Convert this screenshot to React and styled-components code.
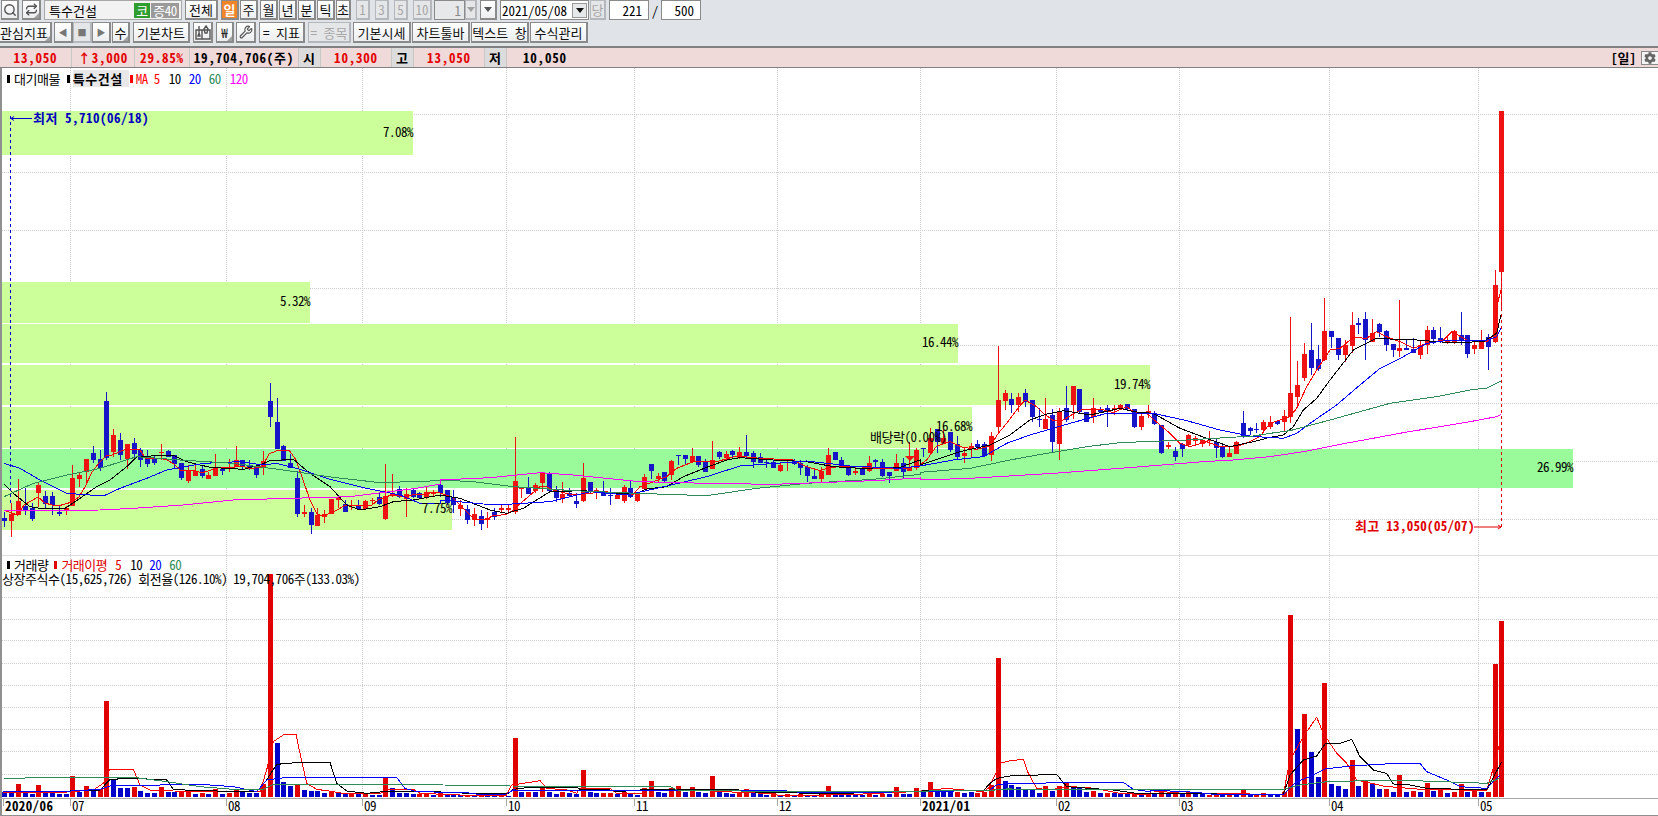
import React from "react";
import styled, { createGlobalStyle } from "styled-components";
import { Search, Repeat, Wrench } from "lucide-react";
import { FaCog } from "react-icons/fa";

const FONT = `"Noto Sans CJK KR", "Liberation Sans", sans-serif`;
const SCALE_X = (i) => 4.3 + 6.805 * i;

// read off the reference: [bodyTop, bodyBottom, wickTop, wickBottom, isRed]
const CANDLES = [
  [518,521,512,527,0],[514,521,503,537,1],[501,515,479,515,1],[506,511,488,515,0],[508,519,503,521,0],
  [485,493,482,507,1],[496,504,491,508,0],[496,505,492,515,0],[512,514,506,516,0],[508,510,506,515,1],
  [478,506,465,506,1],[475,479,472,487,1],[459,472,459,483,1],[453,460,446,463,0],[459,468,450,471,0],
  [401,458,392,460,0],[435,452,429,457,1],[440,455,433,460,0],[444,459,444,469,1],[443,454,438,457,0],
  [450,460,448,467,0],[459,464,450,467,0],[459,463,455,465,0],[452,453,444,460,1],[451,457,450,457,0],
  [455,464,455,468,0],[463,478,463,480,0],[471,481,465,483,1],[471,476,464,476,1],[469,476,465,478,0],
  [475,479,472,479,1],[468,476,454,476,1],[469,471,467,475,0],[468,469,459,472,1],[460,467,446,467,1],
  [460,467,460,470,0],[466,467,460,470,0],[467,475,464,478,0],[461,468,451,475,1],[401,417,383,427,0],
  [422,449,398,449,0],[446,461,445,461,0],[463,468,454,468,0],[478,514,471,517,0],[512,514,505,517,1],
  [512,525,508,534,0],[515,526,508,526,1],[514,517,510,523,1],[499,514,499,514,1],[498,500,495,508,1],
  [504,512,500,512,0],[505,506,500,510,1],[505,509,500,510,0],[501,509,500,510,1],[500,501,498,505,1],
  [497,504,493,505,0],[496,519,464,520,1],[493,495,474,497,1],[489,497,486,498,0],[494,499,488,517,1],
  [490,497,488,498,0],[493,498,492,499,0],[492,498,487,499,1],[492,494,490,497,1],[485,493,482,497,0],
  [490,503,490,505,0],[497,505,490,513,0],[505,509,500,516,1],[509,520,505,524,0],[514,520,508,526,1],
  [516,524,510,530,0],[518,520,512,528,1],[512,517,508,520,0],[508,510,504,513,1],[508,510,504,513,1],
  [481,512,437,514,1],[487,489,487,498,1],[487,494,477,494,0],[485,491,483,493,1],[473,483,472,492,1],
  [473,491,472,493,0],[490,498,486,502,0],[494,499,482,503,1],[493,496,488,497,0],[501,504,493,508,0],
  [478,501,463,502,1],[482,492,482,493,0],[490,493,488,499,1],[492,496,481,496,0],[495,496,488,505,0],
  [495,499,492,499,1],[487,501,485,503,1],[488,497,481,498,0],[492,501,492,502,1],[477,489,474,489,1],
  [464,471,464,479,0],[476,479,473,483,1],[472,481,472,483,0],[461,475,460,480,1],[455,456,455,465,0],
  [455,459,455,465,0],[456,462,448,463,1],[456,465,456,467,0],[462,472,459,472,0],[460,469,441,469,1],
  [452,457,451,459,0],[454,458,451,460,1],[451,455,450,458,0],[452,458,447,459,1],[452,456,435,458,0],
  [453,462,451,468,0],[457,463,453,463,0],[462,463,460,468,0],[462,468,460,468,0],[465,471,463,472,1],
  [462,463,459,471,1],[461,464,459,465,0],[463,468,460,475,0],[467,476,465,482,0],[476,479,470,479,0],
  [471,479,467,482,1],[455,475,448,475,1],[452,460,452,460,0],[460,467,457,468,0],[466,475,465,476,0],
  [471,473,467,475,1],[469,475,467,475,0],[463,471,456,472,1],[460,462,459,467,0],[462,476,459,477,0],
  [472,476,472,483,0],[463,471,454,471,1],[463,472,458,479,0],[467,471,442,471,1],[450,468,448,470,1],
  [448,449,448,457,0],[438,453,428,455,1],[429,442,429,453,0],[438,443,429,443,1],[432,450,432,452,0],
  [444,457,436,460,0],[453,456,448,463,1],[446,449,443,458,1],[444,447,440,450,0],[444,456,442,457,0],
  [436,455,432,461,1],[400,427,346,432,1],[393,401,390,410,1],[399,405,393,413,0],[397,405,393,412,1],
  [393,402,389,407,0],[400,417,400,422,0],[419,420,408,427,0],[419,429,398,429,1],[415,442,409,453,0],
  [412,444,408,460,1],[408,420,386,422,0],[386,405,386,419,1],[389,412,389,413,0],[412,422,412,422,0],
  [408,417,398,423,1],[409,412,407,413,0],[408,412,405,427,0],[408,410,405,415,1],[405,409,404,410,1],
  [404,409,404,410,0],[409,427,409,428,0],[416,427,412,430,1],[411,414,405,418,1],[413,424,411,425,0],
  [425,453,425,454,0],[445,447,442,449,1],[451,457,447,461,0],[444,449,443,457,0],[435,445,434,446,1],
  [438,441,436,446,1],[440,444,439,447,1],[440,441,431,446,1],[442,448,439,458,0],[446,457,444,458,0],
  [453,457,447,457,1],[442,454,441,454,1],[423,436,411,438,0],[428,431,427,435,0],[429,430,423,433,0],
  [422,430,420,431,1],[422,427,416,429,1],[421,424,420,425,0],[416,422,410,431,1],[393,417,317,423,1],
  [385,397,361,405,1],[354,378,343,381,1],[350,368,323,375,0],[359,369,345,371,0],[331,360,298,361,1],
  [331,337,331,348,0],[338,355,338,360,0],[345,355,340,362,1],[325,346,312,353,1],[323,325,318,334,0],
  [319,340,312,360,0],[333,342,319,342,1],[324,332,323,337,0],[331,345,330,351,0],[344,350,344,357,0],
  [348,351,300,357,1],[348,350,339,350,0],[349,353,338,353,0],[345,355,340,359,1],[330,345,326,354,1],
  [330,339,327,344,0],[338,340,327,343,0],[340,342,335,344,1],[331,342,330,344,1],[335,341,312,345,0],
  [335,354,335,358,0],[345,349,340,354,1],[341,349,330,349,1],[337,347,334,370,0],[285,342,270,343,1],
  [111,272,111,310,1],
];

// bar heights, negative = blue
const VOLUME = [
  -5,-5,13,-4,-3,12,-4,-4,-3,-3,21,-5,11,-8,8,96,-18,-9,-9,10,
  -6,-4,-4,10,-5,-5,6,6,-3,4,-3,8,-3,4,8,-5,-4,-4,13,223,
  -54,-15,-11,12,-7,-6,-6,-4,6,-4,-4,4,-3,4,-2,-2,19,-9,-4,-4,
  -3,3,4,-2,4,-2,-2,-2,2,-2,2,-2,-2,2,-1,59,-5,5,-5,9,
  -5,-3,5,-4,-3,27,-5,-4,4,4,-3,5,-3,-2,9,16,-5,-4,9,11,
  -5,10,-5,-4,21,-5,-4,-3,4,8,-4,-3,-2,4,-2,3,-2,3,-2,-2,
  3,11,-4,-3,-3,-3,-2,5,-2,3,-3,10,-3,-3,9,-5,15,-5,-5,-5,
  5,-4,-5,4,5,12,139,-16,-12,-10,-7,-7,-4,11,-6,11,14,-10,-9,-5,
  6,-4,4,-4,-3,-3,4,-3,3,-3,5,-3,3,-3,5,-3,-3,2,2,-2,
  2,-2,7,-2,2,4,-2,-2,5,182,-68,83,-45,-20,114,-13,-11,-8,37,-11,
  16,-13,-8,8,-5,22,-5,6,-5,14,-6,8,-4,5,13,-5,7,-5,5,133,176,
];

// polylines, traced in 3x crops: [originX, originY, x, y, x, y...]
const trace = (segments) =>
  segments
    .flatMap(([ox, oy, ...p]) =>
      p.flatMap((v, i) => (i % 2 === 0 ? [`${ox + v / 3},${oy + p[i + 1] / 3}`] : []))
    )
    .join(" ");

const PRICE_LINES = [
  ["#ff0000", [
    [0, 360, 18, 453, 52, 465, 72, 435, 93, 423, 114, 411, 135, 429, 156, 435, 174, 438, 195, 432, 216, 426, 237, 411, 255, 381, 276, 336, 297, 309, 318, 288, 336, 285, 357, 276, 378, 267, 399, 267, 420, 270, 438, 297, 459, 294, 480, 294, 501, 300, 522, 312, 540, 330, 561, 333, 582, 330, 603, 339, 624, 333, 642, 327, 663, 321, 684, 324, 705, 321, 726, 318, 744, 324, 765, 324, 786, 321, 807, 282, 828, 273, 849, 270, 867, 270, 888, 300, 909, 360, 930, 420, 951, 462, 969, 468, 990, 459, 1011, 450, 1032, 438, 1053, 435, 1074, 435, 1092, 435, 1116, 435, 1134, 420, 1155, 411, 1176, 405, 1197, 408, 1215, 411, 1236, 405, 1257, 402, 1278, 402, 1299, 396, 1320, 399],
    [440, 380, 36, 351, 60, 375, 81, 396, 99, 414, 120, 420, 141, 417, 162, 405, 183, 405, 201, 402, 222, 390, 230, 380, 300, 320, 320, 320, 340, 330, 400, 345, 500, 335, 550, 345, 580, 343, 600, 320, 640, 305, 680, 290, 710, 265, 760, 245, 830, 245, 890, 228, 960, 235, 1060, 240, 1100, 260, 1140, 272, 1170, 262, 1240, 258, 1300, 265, 1400, 265, 1440, 255],
    [920, 310, 20, 450, 50, 408, 90, 395, 110, 405, 130, 412, 170, 418, 210, 408, 235, 370, 260, 340, 290, 300, 315, 270, 350, 290, 370, 310, 400, 332, 430, 330, 460, 312, 490, 297, 540, 297, 580, 308, 620, 290, 640, 305, 680, 310, 720, 345, 750, 370, 780, 400, 810, 410, 860, 395, 900, 410, 950, 410, 990, 395, 1020, 380],
    [1270, 280, 0, 430, 60, 410, 80, 385, 110, 320, 140, 270, 180, 210, 210, 205, 250, 172, 290, 175, 320, 155, 350, 170, 390, 185, 430, 205, 470, 190, 520, 180, 545, 155, 590, 180, 650, 185, 670, 165, 685, 60, 693, 30],
  ]],
  ["#000000", [
    [0, 360, 12, 372, 40, 400, 90, 440, 130, 447, 195, 445, 240, 415, 290, 380, 330, 360, 380, 320, 410, 290, 520, 285, 560, 305, 630, 322, 730, 328, 780, 315, 810, 302, 880, 298, 930, 340, 990, 380, 1040, 435, 1080, 450, 1140, 440, 1180, 425, 1240, 420, 1320, 405],
    [440, 380, 0, 345, 60, 355, 150, 390, 200, 400, 250, 385, 330, 335, 430, 332, 520, 340, 590, 340, 620, 327, 680, 320, 730, 290, 800, 262, 860, 240, 900, 233, 1000, 240, 1100, 245, 1180, 260, 1260, 265, 1380, 262, 1440, 240],
    [920, 310, 0, 465, 60, 445, 120, 425, 210, 405, 270, 375, 330, 330, 380, 312, 430, 302, 510, 315, 600, 295, 640, 305, 700, 310, 780, 355, 860, 385, 930, 410, 1000, 395],
    [1270, 280, 0, 472, 40, 465, 70, 440, 100, 390, 140, 355, 180, 300, 250, 210, 320, 175, 380, 178, 440, 180, 540, 188, 640, 185, 680, 160, 693, 105],
  ]],
  ["#0000ff", [
    [0, 360, 12, 310, 60, 325, 120, 360, 200, 400, 310, 408, 360, 385, 440, 355, 500, 330, 610, 310, 720, 305, 790, 315, 830, 310, 890, 325, 980, 355, 1100, 385, 1200, 405, 1260, 430, 1320, 430],
    [440, 380, 0, 360, 130, 372, 200, 373, 330, 365, 450, 335, 560, 345, 650, 325, 800, 290, 900, 258, 980, 252, 1100, 243, 1230, 258, 1380, 265, 1440, 258],
    [920, 310, 0, 468, 100, 450, 190, 440, 260, 400, 330, 375, 450, 340, 560, 310, 700, 310, 800, 332, 900, 360, 1000, 380],
    [1270, 280, 0, 472, 40, 475, 80, 460, 120, 430, 200, 375, 270, 315, 330, 265, 400, 230, 470, 190, 540, 180, 650, 180, 680, 170, 693, 145],
  ]],
  ["#2e8b57", [
    [0, 360, 12, 410, 100, 370, 200, 345, 300, 325, 410, 290, 540, 300, 700, 310, 850, 330, 1000, 352, 1140, 368, 1230, 365, 1320, 362],
    [440, 380, 0, 300, 100, 305, 220, 320, 400, 332, 590, 340, 800, 347, 950, 325, 1100, 310, 1300, 298, 1440, 283],
    [920, 310, 0, 487, 150, 475, 270, 450, 380, 430, 500, 410, 600, 398, 800, 390, 1000, 378],
    [1270, 280, 0, 460, 60, 452, 180, 420, 360, 370, 500, 350, 610, 328, 650, 325, 693, 303],
  ]],
  ["#ff00ff", [
    [0, 360, 12, 452, 300, 450, 400, 445, 550, 435, 700, 420, 870, 415, 1050, 410, 1250, 385, 1320, 372],
    [440, 380, 0, 300, 150, 293, 300, 278, 400, 285, 600, 305, 800, 310, 1000, 313, 1300, 302, 1440, 294],
    [920, 310, 0, 510, 150, 505, 400, 490, 600, 475, 850, 455, 940, 450],
    [1270, 280, 0, 530, 100, 515, 200, 495, 400, 458, 600, 425, 680, 410, 693, 403],
  ]],
];

const VOLUME_LINES = [
  ["#ff0000", [
    [0, 690, 10, 306, 200, 306, 280, 300, 310, 280, 330, 238, 400, 238, 420, 285, 450, 300, 520, 303, 780, 305, 800, 240, 820, 155, 850, 135, 888, 132, 900, 190, 920, 280, 950, 298, 1000, 305, 1040, 312, 1140, 310, 1160, 300, 1240, 298, 1260, 310, 1450, 318],
    [490, 680, 50, 345, 65, 315, 100, 310, 150, 302, 170, 325, 230, 330, 260, 340, 270, 325, 360, 325, 380, 340, 450, 342, 470, 330, 600, 330, 700, 335, 830, 340, 860, 345, 990, 345],
    [820, 680, 0, 345, 130, 342, 280, 335, 340, 330, 380, 325, 410, 328, 490, 335, 505, 325, 525, 285, 540, 250, 570, 242, 610, 238, 625, 280, 650, 325, 690, 330, 740, 320, 800, 322, 850, 330, 900, 340, 990, 345],
    [1150, 600, 0, 572, 100, 580, 400, 583, 420, 480, 460, 410, 500, 352, 520, 400, 560, 460, 590, 490, 620, 540, 700, 558, 740, 562, 800, 567, 1010, 572, 1040, 470, 1055, 400],
  ]],
  ["#000000", [
    [0, 690, 10, 305, 210, 303, 300, 300, 330, 268, 400, 265, 500, 270, 520, 298, 590, 302, 770, 305, 800, 270, 830, 223, 900, 217, 990, 217, 1010, 280, 1040, 303, 1100, 310, 1150, 305, 1300, 305, 1450, 312],
    [490, 680, 55, 340, 70, 328, 110, 323, 260, 322, 270, 328, 360, 330, 380, 335, 450, 330, 740, 328, 760, 335, 860, 338, 990, 340],
    [820, 680, 0, 342, 340, 332, 490, 332, 510, 310, 530, 295, 570, 288, 710, 283, 740, 320, 880, 330, 950, 340, 990, 340],
    [1150, 600, 0, 580, 200, 582, 400, 583, 420, 525, 460, 480, 500, 468, 525, 432, 570, 430, 605, 418, 630, 470, 670, 510, 710, 520, 730, 552, 780, 555, 830, 565, 1010, 570, 1055, 485],
  ]],
  ["#0000ff", [
    [0, 690, 10, 305, 180, 305, 300, 298, 340, 285, 480, 285, 600, 283, 700, 290, 770, 305, 800, 270, 860, 262, 1190, 262, 1215, 295, 1250, 305, 1400, 308, 1450, 315],
    [490, 680, 50, 342, 70, 330, 350, 332, 880, 332, 940, 338, 990, 338],
    [820, 680, 0, 338, 330, 335, 510, 330, 530, 315, 570, 310, 910, 307, 940, 328, 990, 335],
    [1150, 600, 0, 570, 140, 577, 200, 584, 400, 584, 440, 545, 480, 530, 525, 507, 600, 498, 740, 490, 810, 490, 830, 515, 890, 540, 930, 560, 1010, 565, 1050, 525],
  ]],
  ["#2e8b57", [
    [0, 690, 12, 265, 140, 263, 290, 263, 400, 262, 500, 275, 600, 290, 700, 298, 790, 298, 820, 283, 1280, 283, 1330, 285, 1450, 286],
    [490, 680, 60, 318, 540, 320, 560, 330, 880, 335, 990, 335],
    [820, 680, 0, 335, 500, 332, 560, 327, 990, 328],
    [1150, 600, 0, 568, 400, 568, 450, 555, 540, 544, 760, 541, 960, 548, 1010, 550, 1050, 535],
  ]],
];

const ZONES = [
  { x: 1, y: 111, w: 412, h: 44, label: "7.08%", ly: 137 },
  { x: 1, y: 282, w: 309, h: 41, label: "5.32%", ly: 306 },
  { x: 1, y: 324, w: 957, h: 39, label: "16.44%", ly: 347 },
  { x: 1, y: 365, w: 1149, h: 40, label: "19.74%", ly: 389 },
  { x: 1, y: 407, w: 971, h: 41, label: "16.68%", ly: 431 },
  { x: 1, y: 449, w: 1572, h: 39, label: "26.99%", ly: 472, strong: true },
  { x: 1, y: 490, w: 451, h: 40, label: "7.75%", ly: 513 },
];

const PRICE_GRID = [114, 172, 230, 288, 345, 403, 461, 519];
const VOLUME_GRID = [597, 619, 640, 663, 685, 707, 729, 751, 774];
const MONTHS = [
  { x: 3, label: "2020/06", bold: true },
  { x: 70, label: "07" },
  { x: 226, label: "08" },
  { x: 362, label: "09" },
  { x: 506, label: "10" },
  { x: 634, label: "11" },
  { x: 777, label: "12" },
  { x: 920, label: "2021/01", bold: true },
  { x: 1056, label: "02" },
  { x: 1179, label: "03" },
  { x: 1329, label: "04" },
  { x: 1478, label: "05" },
];

const Global = createGlobalStyle`
  html, body { margin: 0; padding: 0; background: #fff; overflow: hidden; }
  #root { width: 1658px; height: 816px; }
`;

const Page = styled.div`
  width: 1658px;
  height: 816px;
  display: flex;
  flex-direction: column;
  overflow: hidden;
  font: 12px/1 ${FONT};
  font-feature-settings: "hwid";
  color: #000;
`;

const TopBar = styled.div`
  height: 46px;
  flex: none;
  background: #e0e4e8;
  display: flex;
  flex-direction: column;
  overflow: hidden;
`;

const ToolRow = styled.div`
  display: flex;
  align-items: stretch;
  height: ${(p) => p.$h}px;
  margin-top: ${(p) => p.$top || 0}px;
  padding-left: ${(p) => p.$left || 0}px;
`;

const Btn = styled.div`
  position: relative;
  flex: none;
  box-sizing: border-box;
  width: ${(p) => p.$w}px;
  margin-left: ${(p) => p.$ml || 0}px;
  display: flex;
  align-items: center;
  justify-content: center;
  white-space: nowrap;
  overflow: hidden;
  font-size: 13px;
  border: 1px solid ${(p) => (p.$off ? "#b4b8bc" : "#8a8a8a")};
  border-right-width: 2px;
  border-bottom-width: 2px;
  background: ${(p) => (p.$active ? "#f08428" : p.$off ? "#e4e6e8" : "linear-gradient(#ffffff, #eceef0)")};
  color: ${(p) => (p.$active ? "#fff" : p.$off ? "#a8a8a8" : "#111")};
  font-weight: ${(p) => (p.$active ? 700 : 400)};
  ${(p) =>
    p.$corner &&
    `&::after {
      content: "";
      position: absolute;
      right: 0;
      bottom: 0;
      border-style: solid;
      border-width: 0 0 5px 5px;
      border-color: transparent transparent #a0a0a0 transparent;
    }`}
`;

const NameField = styled.div`
  flex: none;
  box-sizing: border-box;
  width: 138px;
  margin-left: 3px;
  padding: 0 2px 0 4px;
  display: flex;
  align-items: center;
  background: #f2f2f2;
  border: 1px solid #a8a8a8;
  font-size: 13px;
`;

const NameText = styled.span`
  flex: 1;
`;

const Badge = styled.span`
  height: 15px;
  width: ${(p) => p.$w}px;
  background: ${(p) => p.$bg};
  color: #fff;
  display: flex;
  align-items: center;
  justify-content: center;
  font-size: 13px;
  letter-spacing: -0.5px;
  margin-left: 1px;
`;

const Field = styled.div`
  flex: none;
  box-sizing: border-box;
  width: ${(p) => p.$w}px;
  margin-left: ${(p) => p.$ml || 0}px;
  padding: 0 ${(p) => p.$pad ?? 3}px;
  display: flex;
  align-items: center;
  justify-content: ${(p) => p.$align || "flex-end"};
  background: ${(p) => (p.$off ? "#e6e8ea" : "#fff")};
  color: ${(p) => (p.$off ? "#8a8a8a" : "#000")};
  border: 1px solid #8a8a8a;
  font-size: 13px;
`;

const DateDrop = styled.span`
  width: 15px;
  height: 15px;
  margin-left: auto;
  background: #e6e8ea;
  border: 1px solid #999;
  box-sizing: border-box;
  display: flex;
  align-items: center;
  justify-content: center;
`;

const Triangle = styled.i`
  width: 0;
  height: 0;
  border-left: 4px solid transparent;
  border-right: 4px solid transparent;
  border-top: 5px solid ${(p) => p.$c || "#111"};
`;

const Slash = styled.span`
  width: 12px;
  flex: none;
  display: flex;
  align-items: center;
  justify-content: center;
  font-size: 13px;
`;

const NavGlyph = styled.span`
  color: #777;
  font-size: 9px;
`;

const PriceBar = styled.div`
  flex: none;
  box-sizing: border-box;
  height: 22px;
  display: flex;
  align-items: stretch;
  background: #f0d9d9;
  border-top: 2px solid #808080;
  border-bottom: 1px solid #808080;
  font-weight: 700;
  font-size: 13px;
  letter-spacing: 0.8px;
`;

const PriceCell = styled.div`
  flex: none;
  width: ${(p) => p.$w}px;
  box-sizing: border-box;
  display: flex;
  align-items: center;
  justify-content: center;
  white-space: nowrap;
  color: ${(p) => (p.$red ? "#e40000" : "#000")};
  background: ${(p) => (p.$tag ? "#dcdcdc" : "transparent")};
  border-right: 1px solid #c8c8c8;
`;

const PriceRest = styled.div`
  flex: 1;
  display: flex;
  align-items: center;
  padding-left: 16px;
`;

const PeriodTag = styled.span`
  margin-left: auto;
  margin-right: 5px;
  letter-spacing: 0;
`;

const GearBtn = styled.span`
  width: 20px;
  margin-right: -7px;
  display: flex;
  align-items: center;
  padding-left: 2px;
  background: #f4f4f4;
  border: 1px solid #8a8a8a;
  color: #666;
  font-size: 12px;
`;

const ChartArea = styled.div`
  position: relative;
  flex: 1;
  background: #fff;
`;

const ChartSvg = styled.svg`
  display: block;
  width: 1658px;
  height: 748px;
`;

const Legend = styled.div`
  position: absolute;
  left: ${(p) => p.$left}px;
  top: ${(p) => p.$top}px;
  display: flex;
  align-items: center;
  white-space: nowrap;
  font-size: 13px;
  letter-spacing: ${(p) => p.$ls ?? -0.5}px;
`;

const Mark = styled.i`
  width: 3px;
  height: 8px;
  margin-right: ${(p) => p.$mr ?? 4}px;
  background: ${(p) => p.$c};
`;

const LegendItem = styled.span`
  color: ${(p) => p.$c || "#000"};
  margin-right: ${(p) => p.$gap ?? 7}px;
  font-weight: ${(p) => (p.$bold ? 700 : 400)};
  letter-spacing: ${(p) => (p.$bold ? "0.5px" : "inherit")};
  background: ${(p) => (p.$hl ? "#e8e8e8" : "transparent")};
  padding: ${(p) => (p.$hl ? "2px 6px 2px 0" : 0)};
`;

const ChartLabel = styled.text`
  font: ${(p) => (p.$bold ? 700 : 400)} 13px ${FONT};
  font-feature-settings: "hwid";
  fill: ${(p) => p.$c || "#000"};
  letter-spacing: ${(p) => p.$ls ?? -0.5}px;
`;

const Poly = ({ color, segments }) => (
  <polyline points={trace(segments)} fill="none" stroke={color} strokeWidth="1" shapeRendering="crispEdges" />
);

const ToolsIcon = () => (
  <svg width="16" height="15" viewBox="0 0 16 15" fill="none" stroke="#555" strokeWidth="1.4">
    <path d="M1 5h14v9H1z" />
    <path d="M4 1v7M4 8l-1 3h2zM11 1l2 3-1 4h-2L9 4z" />
    <path d="M7 5v9" />
  </svg>
);

const GridLines = () => (
  <g stroke="#cccccc" strokeDasharray="1 1" shapeRendering="crispEdges">
    {MONTHS.slice(1).map((m) => (
      <line key={m.x} x1={m.x + 0.5} x2={m.x + 0.5} y1="68" y2="798" />
    ))}
    {[...PRICE_GRID, ...VOLUME_GRID].map((y) => (
      <line key={y} x1="2" x2="1658" y1={y + 0.5} y2={y + 0.5} />
    ))}
  </g>
);

const Zones = () =>
  ZONES.map((z) => (
    <rect key={z.label} x={z.x} y={z.y} width={z.w} height={z.h} fill={z.strong ? "#99fb99" : "#ccff99"} />
  ));

const ZoneLabels = () =>
  ZONES.map((z) => (
    <ChartLabel key={z.label} x={z.x + z.w} y={z.ly} textAnchor="end">
      {z.label}
    </ChartLabel>
  ));

const Candles = () =>
  CANDLES.map(([top, bottom, hi, lo, red], i) => {
    const x = Math.round(SCALE_X(i));
    const c = red ? "#ee1212" : "#1616c8";
    return (
      <g key={i} fill={c} shapeRendering="crispEdges">
        <rect x={x} y={hi} width="1" height={lo - hi} />
        <rect x={x - 2} y={top} width="5" height={Math.max(bottom - top, 1)} />
      </g>
    );
  });

const VolumeBars = () =>
  VOLUME.map((v, i) => {
    const h = Math.abs(v);
    return (
      <rect
        key={i}
        x={Math.round(SCALE_X(i)) - 2}
        y={797 - h}
        width="5"
        height={h}
        fill={v > 0 ? "#e00000" : "#0000c8"}
        shapeRendering="crispEdges"
      />
    );
  });

const Annotations = () => (
  <>
    <line x1="10.5" x2="10.5" y1="116" y2="503" stroke="#0000d0" strokeDasharray="3 3" shapeRendering="crispEdges" />
    <path d="M11 118.5h21M14 116.5l-3 2 3 2" fill="none" stroke="#0000d0" />
    <ChartLabel x="33" y="123" $c="#0000c0" $bold $ls="0.5">최저 5,710(06/18)</ChartLabel>

    <line x1="1501.5" x2="1501.5" y1="272" y2="527" stroke="#e00000" strokeDasharray="3 3" shapeRendering="crispEdges" />
    <ChartLabel x="1355" y="531" $c="#e00000" $bold $ls="0.3">최고 13,050(05/07)</ChartLabel>
    <path d="M1474 527h27M1498 525l3 2-3 2" fill="none" stroke="#e00000" />

    <ChartLabel x="870" y="442">배당락(0.00%)</ChartLabel>
    <path d="M905 456h10l-5 5z" fill="#ee1212" />
  </>
);

const Axis = () => (
  <>
    <rect x="0" y="68" width="2" height="748" fill="#909090" />
    <rect x="2" y="555" width="1656" height="1" fill="#dedede" />
    <rect x="0" y="798" width="1658" height="1" fill="#a8a8a8" />
    <rect x="0" y="815" width="1658" height="1" fill="#909090" />
    {MONTHS.map((m) => (
      <g key={m.label}>
        <rect x={m.x} y="799" width="1" height="7" fill="#a8a8a8" />
        <ChartLabel x={m.x + 2} y="811" $bold={m.bold} $ls={m.bold ? 0.4 : -0.5}>
          {m.label}
        </ChartLabel>
      </g>
    ))}
  </>
);

export default function App() {
  return (
    <Page>
      <Global />
      <TopBar>
        <ToolRow $h={20} $left={1}>
          <Btn $w={18}>
            <Search size={14} color="#555" strokeWidth={2.4} />
          </Btn>
          <Btn $w={19} $ml={3} $corner>
            <Repeat size={13} color="#555" strokeWidth={2.4} />
          </Btn>
          <NameField>
            <NameText>특수건설</NameText>
            <Badge $w={16} $bg="#2f9e2f">코</Badge>
            <Badge $w={28} $bg="#9a9a9a">증40</Badge>
          </NameField>
          <Btn $w={33} $ml={3}>전체</Btn>
          <Btn $w={18} $ml={3} $active>일</Btn>
          <Btn $w={18} $ml={1}>주</Btn>
          <Btn $w={18} $ml={2}>월</Btn>
          <Btn $w={18} $ml={1}>년</Btn>
          <Btn $w={18} $ml={1}>분</Btn>
          <Btn $w={18} $ml={1}>틱</Btn>
          <Btn $w={15} $ml={1}>초</Btn>
          <Btn $w={14} $ml={5} $off>1</Btn>
          <Btn $w={14} $ml={5} $off>3</Btn>
          <Btn $w={14} $ml={5} $off>5</Btn>
          <Btn $w={19} $ml={5} $off>10</Btn>
          <Field $w={31} $ml={2} $off>1</Field>
          <Btn $w={12} $off><Triangle $c="#a0a0a0" /></Btn>
          <Btn $w={17} $ml={3}><Triangle $c="#555" /></Btn>
          <Field $w={89} $ml={3} $pad={1}>
            2021/05/08
            <DateDrop><Triangle /></DateDrop>
          </Field>
          <Btn $w={16} $ml={1} $off>당</Btn>
          <Field $w={40} $ml={3} $pad={6}>221</Field>
          <Slash>/</Slash>
          <Field $w={40} $pad={6}>500</Field>
        </ToolRow>
        <ToolRow $h={21} $top={2}>
          <Btn $w={55} $ml={-3} $corner>관심지표</Btn>
          <Btn $w={19} $ml={2}><NavGlyph>◀</NavGlyph></Btn>
          <Btn $w={19} $off><NavGlyph>■</NavGlyph></Btn>
          <Btn $w={19}><NavGlyph>▶</NavGlyph></Btn>
          <Btn $w={18} $ml={1} $corner>수</Btn>
          <Btn $w={57} $ml={3}>기본차트</Btn>
          <Btn $w={20} $ml={3}><ToolsIcon /></Btn>
          <Btn $w={18} $ml={3} $corner>₩</Btn>
          <Btn $w={20} $ml={2}><Wrench size={14} color="#555" /></Btn>
          <Btn $w={46} $ml={3}>= 지표</Btn>
          <Btn $w={43} $ml={3} $off>= 종목</Btn>
          <Btn $w={58} $ml={2}>기본시세</Btn>
          <Btn $w={58} $ml={1}>차트툴바</Btn>
          <Btn $w={58} $ml={1}>텍스트 창</Btn>
          <Btn $w={58} $ml={1}>수식관리</Btn>
        </ToolRow>
      </TopBar>

      <PriceBar>
        <PriceCell $w={72} $red>13,050</PriceCell>
        <PriceCell $w={63} $red>↑3,000</PriceCell>
        <PriceCell $w={55} $red>29.85%</PriceCell>
        <PriceCell $w={109}>19,704,706(주)</PriceCell>
        <PriceCell $w={22} $tag>시</PriceCell>
        <PriceCell $w={71} $red>10,300</PriceCell>
        <PriceCell $w={22} $tag>고</PriceCell>
        <PriceCell $w={71} $red>13,050</PriceCell>
        <PriceCell $w={22} $tag>저</PriceCell>
        <PriceRest>
          10,050
          <PeriodTag>[일]</PeriodTag>
          <GearBtn><FaCog /></GearBtn>
        </PriceRest>
      </PriceBar>

      <ChartArea>
        <ChartSvg viewBox="0 68 1658 748">
          <GridLines />
          <Zones />
          <Candles />
          {PRICE_LINES.map(([c, s]) => (
            <Poly key={c} color={c} segments={s} />
          ))}
          <VolumeBars />
          {VOLUME_LINES.map(([c, s]) => (
            <Poly key={c} color={c} segments={s} />
          ))}
          <ZoneLabels />
          <Annotations />
          <Axis />
        </ChartSvg>

        <Legend $left={7} $top={2}>
          <Mark $c="#000" />
          <LegendItem>대기매물</LegendItem>
          <Mark $c="#000" $mr={3} />
          <LegendItem $bold $hl $gap={1}>특수건설</LegendItem>
          <Mark $c="#ff0000" $mr={3} />
          <LegendItem $c="#ff0000" $gap={9}>MA 5</LegendItem>
          <LegendItem $gap={8}>10</LegendItem>
          <LegendItem $c="#0000ff" $gap={8}>20</LegendItem>
          <LegendItem $c="#2e8b57" $gap={9}>60</LegendItem>
          <LegendItem $c="#ff00ff">120</LegendItem>
        </Legend>
        <Legend $left={7} $top={490}>
          <Mark $c="#000" />
          <LegendItem $gap={6}>거래량</LegendItem>
          <Mark $c="#e00000" />
          <LegendItem $c="#e00000" $gap={8}>거래이평</LegendItem>
          <LegendItem $c="#e00000" $gap={9}>5</LegendItem>
          <LegendItem $gap={7}>10</LegendItem>
          <LegendItem $c="#0000ff" $gap={8}>20</LegendItem>
          <LegendItem $c="#2e8b57">60</LegendItem>
        </Legend>
        <Legend $left={2} $top={504} $ls={-0.45}>
          <LegendItem>상장주식수(15,625,726) 회전율(126.10%) 19,704,706주(133.03%)</LegendItem>
        </Legend>
      </ChartArea>
    </Page>
  );
}
